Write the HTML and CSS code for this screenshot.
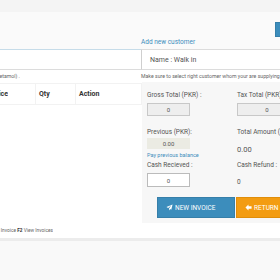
FILE: index.html
```html
<!DOCTYPE html>
<html>
<head>
<meta charset="utf-8">
<link rel="stylesheet" href="styles.css">
</head>
<body>
<div class="page">
  <div class="topbar"></div>
  <div class="header">
    <div class="h-left"></div>
    <div class="h-right">
      <div class="h-btnrow"><span class="top-btn"></span></div>
      <a class="link add-cust">Add new customer</a>
    </div>
  </div>
  <div class="search-row">
    <div class="search-input"></div>
    <div class="cust-box">Name : Walk in</div>
  </div>
  <div class="hint-row">
    <div class="hint-left"><span>Search product by name or barcode (e.g. Paracetamol) .</span></div>
    <div class="hint-right">Make sure to select right customer whom your are supplying the items.</div>
  </div>
  <div class="main">
    <div class="cart">
      <div class="thead">
        <div class="th c1"><span>Price</span></div>
        <div class="th c2">Qty</div>
        <div class="th c3">Action</div>
      </div>
    </div>
    <div class="panel">
      <div class="grid">
        <div class="cell">
          <div class="lbl">Gross Total (PKR) :</div>
          <div class="box ro">0</div>
        </div>
        <div class="cell">
          <div class="lbl">Tax Total (PKR) :</div>
          <div class="box ro wide">0</div>
        </div>
        <div class="cell">
          <div class="lbl">Previous (PKR):</div>
          <div class="box prev">0.00</div>
          <a class="link pay">Pay previous balance</a>
        </div>
        <div class="cell">
          <div class="lbl">Total Amount (PKR) :</div>
          <div class="val big">0.00</div>
        </div>
        <div class="cell">
          <div class="lbl">Cash Recieved :</div>
          <div class="box cash">0</div>
        </div>
        <div class="cell">
          <div class="lbl">Cash Refund :</div>
          <div class="val">0</div>
        </div>
      </div>
      <div class="btns">
        <span class="btn blue"><svg viewBox="0 0 16 16" width="7" height="7"><path d="M15 1 L1 7 L5 9 L12 3 L7 10 L7 15 L9.5 11.5 L12 13 Z" fill="#fff"/></svg>NEW INVOICE</span>
        <span class="btn orange"><svg viewBox="0 0 16 16" width="7" height="7"><path d="M1 8 L8 1 L8 5 L15 5 L15 11 L8 11 L8 15 Z" fill="#fff"/></svg>RETURN</span>
      </div>
    </div>
  </div>
  <div class="foot-row">
    <div class="shortcuts"><span><b>F1</b> Saving Invoice <b>F2</b> View Invoices</span></div>
  </div>
  <div class="footer"></div>
</div>
</body>
</html>
```

FILE: styles.css
```css
html, body { margin: 0; padding: 0; overflow: hidden; }
body { background: #f9f9f9; font-family: Roboto, "Noto Sans", sans-serif; color: #444; }
.page { width: 300px; }
.topbar { height: 12px; background: #f4f4f4; }
.header { height: 37px; background: #fafafa; display: grid; grid-template-columns: 141px 1fr; }
.h-right { display: flex; flex-direction: column; justify-content: space-between; }
.h-btnrow { display: flex; justify-content: flex-end; padding-top: 10px; }
.top-btn { display: block; width: 20px; height: 15px; background: #3c8dbc; border: 1px solid #367fa9; box-sizing: border-box; margin-right: 5px; }
.link { color: #3c8dbc; font-size: 6.5px; text-decoration: none; }
.add-cust { padding-bottom: 3px; padding-left: 0; }
.search-row { display: grid; grid-template-columns: 141px 1fr; height: 21px; background: #fff; }
.search-input { border-top: 1px solid #c6dce9; border-bottom: 1px solid #dcdcdc; }
.cust-box { border-top: 1px solid #dcdcdc; border-bottom: 1px solid #dcdcdc; border-left: 1px solid #cfcfcf; font-size: 7px; color: #555; padding-left: 8px; display: flex; align-items: center; }
.hint-row { display: grid; grid-template-columns: 141px 1fr; height: 12px; background: #fff; font-size: 5.2px; color: #666; align-items: center; white-space: nowrap; overflow: hidden; }
.hint-left { width: 20px; overflow: hidden; display: flex; justify-content: flex-end; }
.main { display: grid; grid-template-columns: 142px 1fr; background: #fff; }
.cart { padding-top: 1px; }
.thead { display: grid; grid-template-columns: 36px 40px 59px; height: 22px; border-top: 1px solid #f2f2f2; border-bottom: 1px solid #f2f2f2; border-right: 1px solid #f2f2f2; box-sizing: border-box; }
.th { font-size: 7px; font-weight: bold; color: #333; display: flex; align-items: center; padding-left: 3px; border-right: 1px solid #f2f2f2; white-space: nowrap; overflow: hidden; }
.th.c1 { padding-left: 0; }
.th.c1 span { display: flex; justify-content: flex-end; width: 8px; overflow: hidden; flex: none; }
.th.c3 { border-right: none; }
.panel { background: #f7f7f7; height: 141px; padding: 9px 0 0 5px; box-sizing: border-box; }
.grid { display: grid; grid-template-columns: 90px 90px; row-gap: 0; }
.cell { display: flex; flex-direction: column; }
.lbl { font-size: 6.5px; color: #555; height: 9px; line-height: 9px; white-space: nowrap; margin-bottom: 3px; }
.box { height: 13px; width: 43px; box-sizing: border-box; font-size: 6px; display: flex; align-items: center; justify-content: center; color: #555; }
.ro { background: #eeeeee; border: 1px solid #c8c8c8; margin-bottom: 12px; }
.ro.wide { width: 60px; }
.prev { background: #ebebe3; height: 11px; margin-top: -2px; }
.pay { font-size: 5.5px; margin-top: 3px; margin-bottom: 3px; }
.val { font-size: 7.5px; color: #555; padding-top: 4px; }
.val.big { padding-top: 5px; }
.cash { background: #fff; border: 1px solid #bbb; height: 14px; margin-top: 0; }
.cell:nth-child(6) .val { font-size: 6.5px; padding-top: 5px; }
.btns { display: flex; gap: 1px; margin-top: 10px; padding-left: 10px; }
.btn { height: 21px; display: flex; align-items: center; gap: 2px; color: #fff; font-size: 6.5px; box-sizing: border-box; }
.btn svg { flex: none; }
.blue { width: 78px; background: #3c8dbc; border: 1px solid #367fa9; padding-left: 8px; }
.orange { width: 60px; background: #f39c12; border: 1px solid #e08e0b; padding-left: 8px; }
.foot-row { background: #fff; height: 15px; display: flex; align-items: center; }
.shortcuts { width: 53px; overflow: hidden; display: flex; justify-content: flex-end; white-space: nowrap; font-size: 4.8px; color: #666; }
.shortcuts b { color: #333; }
.footer { height: 3px; background: #ececec; }
```
